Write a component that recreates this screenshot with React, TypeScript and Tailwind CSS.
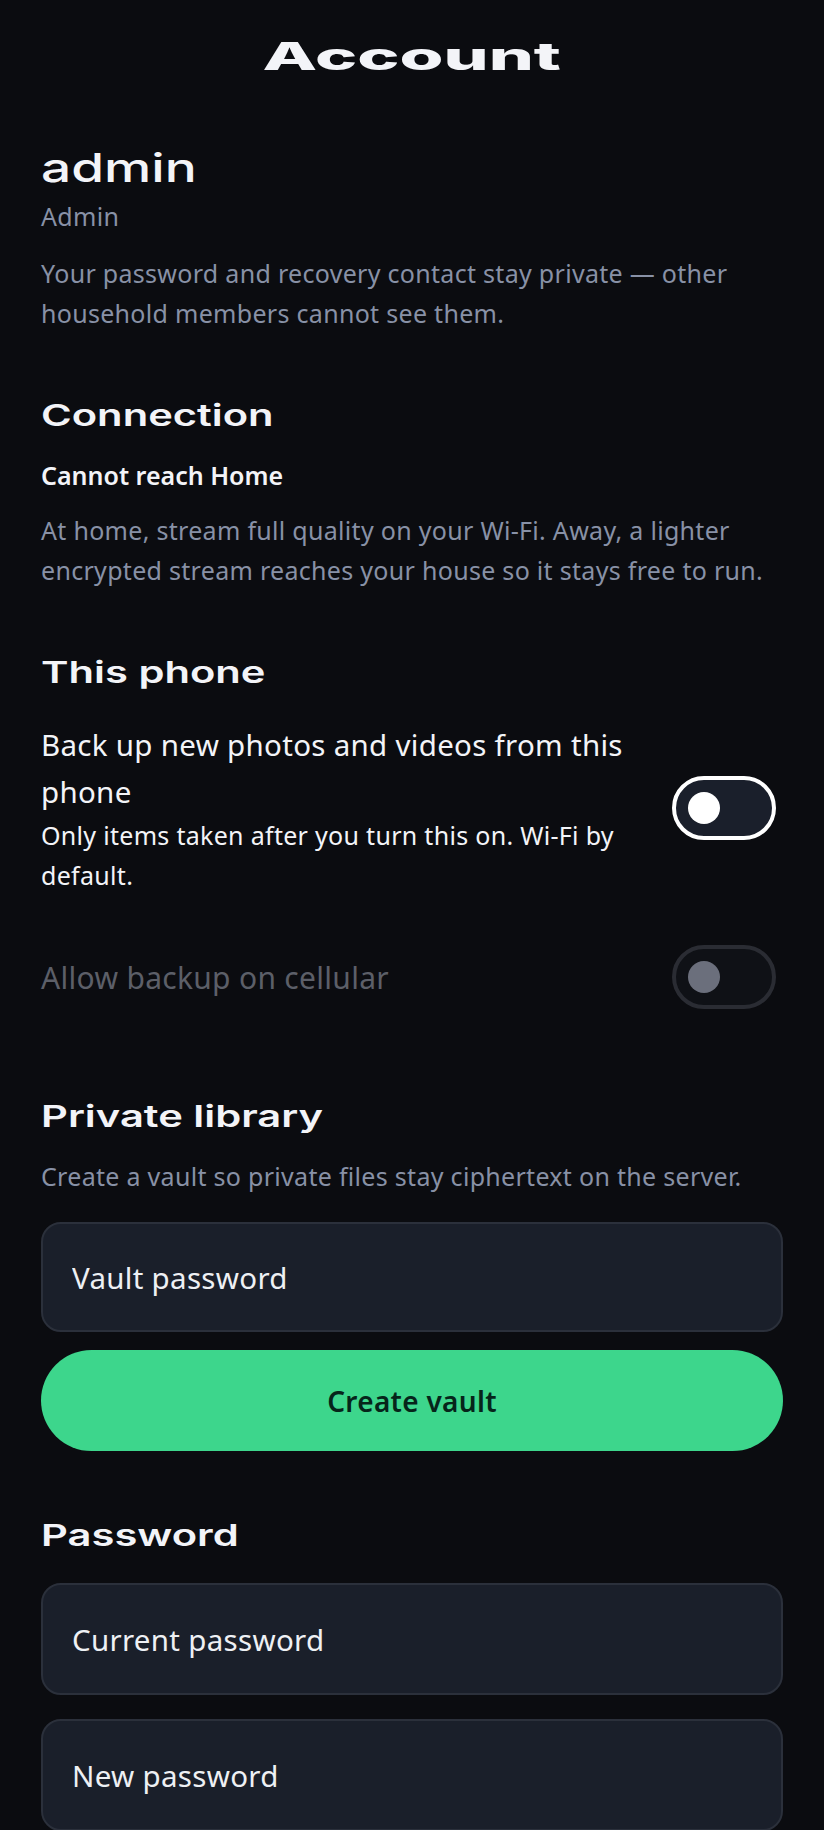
import React, { useState } from "react";

const Heading: React.FC<{ children: React.ReactNode; className?: string }> = ({ children, className }) => (
  <h2 className={"font-[Inter,sans-serif] text-[30px] leading-[40px] font-semibold text-[#f3f4f8] " + (className || "")}>
    <span className="inline-block origin-left scale-x-[1.39] whitespace-nowrap">{children}</span>
  </h2>
);

const Toggle: React.FC<{ on: boolean; disabled?: boolean; onChange?: () => void }> = ({ on, disabled, onChange }) => (
  <button
    type="button"
    onClick={onChange}
    disabled={disabled}
    className={
      "shrink-0 w-[104px] h-[64px] rounded-full border-4 flex items-center px-[12px] " +
      (disabled ? "border-[#2a2c33] bg-[#0f1116]" : "border-white bg-[#1a1f2b]") +
      (on ? " justify-end" : " justify-start")
    }
  >
    <span className={"block w-[32px] h-[32px] rounded-full " + (disabled ? "bg-[#6b6f7c]" : "bg-white")} />
  </button>
);

const inputClass =
  "block w-full rounded-[20px] border-2 border-[#2b303b] bg-[#1a1f2a] px-[29px] text-[29.5px] tracking-[0.3px] text-[#eef0f4] placeholder:text-[#eef0f4] outline-none";

const App: React.FC = () => {
  const [backup, setBackup] = useState(false);
  const [vault, setVault] = useState("");
  const [current, setCurrent] = useState("");
  const [next, setNext] = useState("");

  return (
    <div className="min-h-[1830px] bg-[#0b0c10] font-[Noto_Sans,sans-serif] pt-8 px-[41px] overflow-hidden">
      <h1 className="text-center font-[Inter,sans-serif] text-[38px] leading-[48px] font-extrabold text-[#f3f4f8]">
        <span className="inline-block scale-x-[1.87]">Account</span>
      </h1>

      <section className="mt-[64px]">
        <div className="font-[Inter,sans-serif] text-[40px] leading-[48px] font-medium text-[#f3f4f8]">
          <span className="inline-block origin-left scale-x-[1.33]">admin</span>
        </div>
        <p className="mt-[8px] text-[25px] leading-[32px] tracking-[0.3px] text-[#8891a6]">Admin</p>
        <p className="mt-[21px] text-[25px] leading-[40px] tracking-[0.3px] text-[#8891a6]">
          Your password and recovery contact stay private — other household members cannot see them.
        </p>
      </section>

      <section className="mt-[62px]">
        <Heading>Connection</Heading>
        <p className="mt-[22px] text-[25px] leading-[36px] font-semibold text-[#f3f4f8]">Cannot reach Home</p>
        <p className="mt-[17px] text-[25px] leading-[40px] tracking-[0.3px] text-[#8891a6]">
          At home, stream full quality on your Wi-Fi. Away, a lighter encrypted stream reaches your house so it stays free to run.
        </p>
      </section>

      <section className="mt-[62px]">
        <Heading>This phone</Heading>
        <div className="mt-[29px] flex items-center gap-2 pr-[7px]">
          <div className="flex-1">
            <p className="text-[29.5px] leading-[47px] tracking-[0.3px] text-[#f3f4f8]">
              Back up new photos and videos from this phone
            </p>
            <p className="text-[25px] leading-[40px] tracking-[0.3px] text-[#f3f4f8]">
              Only items taken after you turn this on. Wi-Fi by default.
            </p>
          </div>
          <Toggle on={backup} onChange={() => setBackup(!backup)} />
        </div>
        <div className="mt-[50px] flex items-center gap-2 pr-[7px]">
          <p className="flex-1 text-[30px] leading-[47px] tracking-[0.3px] text-[#5c5f68]">Allow backup on cellular</p>
          <Toggle on={false} disabled />
        </div>
      </section>

      <section className="mt-[87px]">
        <Heading>Private library</Heading>
        <p className="mt-[20px] text-[25px] leading-[40px] tracking-[0.3px] text-[#8891a6]">
          Create a vault so private files stay ciphertext on the server.
        </p>
        <input
          type="password"
          value={vault}
          onChange={(e) => setVault(e.target.value)}
          placeholder="Vault password"
          className={"mt-[26px] h-[110px] " + inputClass}
        />
        <button
          type="button"
          className="mt-[18px] block w-full h-[101px] rounded-full bg-[#3dd68c] text-[28px] tracking-[0.3px] font-semibold text-[#06251a]"
        >
          Create vault
        </button>
      </section>

      <section className="mt-[64px]">
        <Heading>Password</Heading>
        <input
          type="password"
          value={current}
          onChange={(e) => setCurrent(e.target.value)}
          placeholder="Current password"
          className={"mt-[28px] h-[112px] " + inputClass}
        />
        <input
          type="password"
          value={next}
          onChange={(e) => setNext(e.target.value)}
          placeholder="New password"
          className={"mt-[24px] h-[112px] " + inputClass}
        />
      </section>
    </div>
  );
};

export default App;
